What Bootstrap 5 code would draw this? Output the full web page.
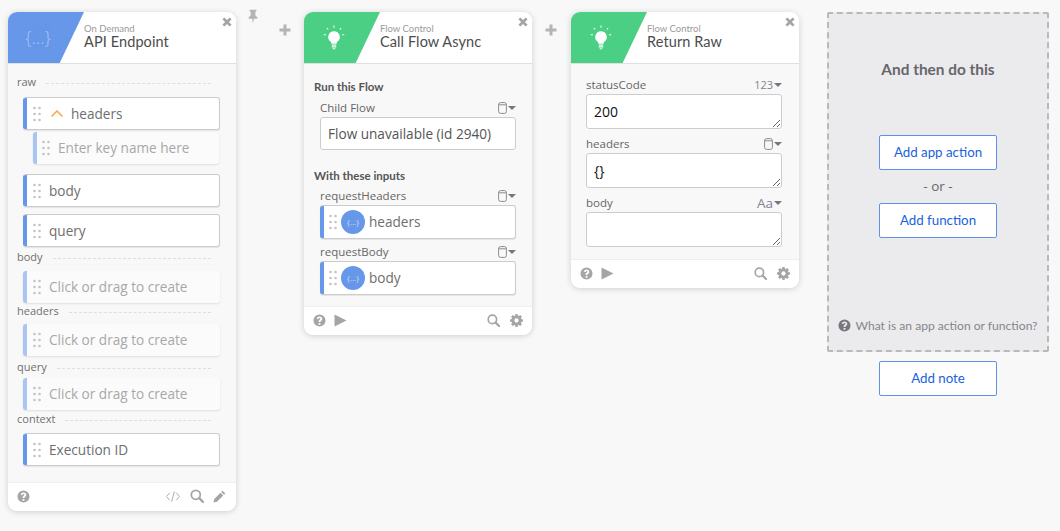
<!DOCTYPE html>
<html lang="en">
<head>
<meta charset="UTF-8">
<meta name="viewport" content="width=device-width, initial-scale=1.0">
<title>Flow Editor</title>
<link href="https://cdn.jsdelivr.net/npm/bootstrap@5.3.3/dist/css/bootstrap.min.css" rel="stylesheet">
<style>
body { background: #f8f8f8; font-family: "Open Sans", sans-serif; color: #666; height: 531px; overflow: hidden; }
.canvas { padding: 12px 10px 0 8px; }
.gutter { position: relative; }
.gutter-a { width: 68px; }
.gutter-b { width: 39px; }
.gutter-c { width: 28px; }
.pin-icon { position: absolute; left: 11px; top: -3px; width: 12px; height: 15px; fill: #b4b4b4; }
.plus-icon { position: absolute; top: 12px; width: 12px; height: 12px; fill: #b4b4b4; }
.gutter-a .plus-icon { left: 43px; }
.gutter-b .plus-icon { left: 13px; }
.step { width: 228px; border: 0; border-radius: 9px; background: #f8f8f8; box-shadow: 0 1px 6px rgba(0,0,0,.17); overflow: hidden; }
.step-head { height: 52px; background: #fff; border-bottom: 1px solid #e0e0e0; position: relative; }
.step-badge { width: 76px; height: 51px; clip-path: polygon(0 0, 100% 0, 68% 100%, 0 100%); flex: none; }
.badge-blue { background: #6797e8; }
.badge-green { background: #4bcf84; }
.brace-mark { color: #fff; opacity: .4; font-size: 18px; font-weight: 300; padding-right: 16px; }
.step-kicker { font-family: Lato, sans-serif; font-size: 9.5px; line-height: 11px; color: #9a9a9a; margin-top: 11px; }
.step-name { font-family: Lato, sans-serif; font-size: 14.5px; line-height: 18px; color: #4c4c4c; margin-top: -1px; letter-spacing: .1px; }
.close-icon { position: absolute; right: 4px; top: 5px; width: 10px; height: 10px; fill: #a5a5a5; }
.step-foot { height: 29px; background: #fff; border-top: 1px solid #eee; padding: 0 9px 2px 9px; }
.foot-api { padding-right: 10px; }
.foot-icon { fill: #a5a5a5; width: 13px; height: 13px; display: block; }
.foot-code { width: 16px; }
.foot-search { width: 14px; height: 14px; }
.foot-tools { gap: 10px; }
.foot-api .foot-tools { gap: 9px; }
.body-api { height: 418px; padding: 11px 16px 0 9px; }
.body-async { height: 242px; padding: 16px 16px 0 10px; }
.body-raw { height: 195px; padding: 13px 17px 0 15px; }
.sect-label { font-size: 11px; line-height: 14px; color: #707070; white-space: nowrap; }
.dots { flex: 1; align-self: center; height: 0; border-bottom: 1px dashed #dedede; margin: 3px 9px 0 10px; }
.api-rows { margin-left: 6px; }
.field-pill { height: 33px; background: #fff; border: 1px solid #ccc; border-left: 0; border-radius: 3px; box-shadow: 0 1px 1px rgba(0,0,0,.08); position: relative; padding-left: 10px; font-size: 13.6px; color: #6e6e6e; overflow: hidden; }
.field-pill::before { content: ""; position: absolute; left: 0; top: 0; bottom: 0; width: 4px; background: #6797e8; }
.pill-empty { height: 32px; background: #fbfbfb; border: 0; box-shadow: 0 1px 2px rgba(0,0,0,.1); color: #a8a8a8; }
.pill-empty::before { background: #a9c5f2; }
.pill-word { margin-top: 2px; }
.grip { width: 8px; height: 16px; fill: #c4c4c4; flex: none; margin-right: 8px; }
.chevron { width: 12px; height: 7px; fill: none; stroke: #f5a742; stroke-width: 1.5; margin: 0 8px 0 2px; flex: none; }
.gap-s { margin-top: 2px; }
.gap-m { margin-top: 8px; }
.gap-q { margin-top: 7px; }
.gap-l { margin-top: 10px; }
.label-row { margin-top: 3px; margin-bottom: 7px; }
.label-tight { margin-top: 1px; margin-bottom: 6px; }
.label-wide { margin-top: 4px; margin-bottom: 4px; }
.label-mid { margin-top: 2px; margin-bottom: 7px; }
.indent-one { margin-left: 10px; width: 186px; padding-left: 9px; }
.group-title { font-family: Lato, sans-serif; font-weight: 700; font-size: 11.5px; line-height: 14px; color: #555; }
.title-next { margin-top: 19px; }
.field-name { font-size: 11.5px; line-height: 16px; color: #666; }
.field-row { margin: 0 0 1px 0; height: 16px; }
.row-first { margin-top: 6px; }
.row-after { margin-top: 5px; }
.row-raw { margin-top: 7px; }
.inputs { padding-left: 6px; }
.flow-input { height: 33px; font-size: 13.6px; color: #555; padding: 0 7px; border-color: #ccc; border-radius: 3px; background: #fff; }
.type-pick { display: flex; align-items: center; gap: 1px; color: #7d8590; font-size: 11px; line-height: 12px; }
.type-text { font-size: 13.5px; }
.db-icon { width: 9px; height: 12px; fill: none; stroke: #8c8c8c; }
.caret { width: 0; height: 0; border-left: 4px solid transparent; border-right: 4px solid transparent; border-top: 4px solid #777; }
.ref-dot { width: 24px; height: 24px; border-radius: 50%; background: #6797e8; color: #cfdff8; font-size: 8px; margin-right: 4px; flex: none; }
.ref-pill { height: 34px; padding-left: 9px; }
.ref-pill .grip { margin-right: 4px; }
.raw-area { height: 35px; min-height: 35px; font-size: 14px; color: #111; padding: 7px 7px 3px; border-color: #ccc; border-radius: 3px; line-height: 20px; resize: vertical; }
.drop-col { width: 222px; }
.drop-zone { height: 340px; background: #ebebed; border: 2px dashed #b9b9b9; border-radius: 2px; padding-top: 45px; }
.drop-title { font-family: Lato, sans-serif; font-weight: 700; font-size: 15.4px; line-height: 20px; color: #66666c; }
.add-btn { width: 118px; height: 35px; background: #fff; border: 1px solid #5f92e6; border-radius: 2px; color: #1a62dc; font-family: Lato, sans-serif; font-size: 13.3px; padding: 0; }
.first-btn { margin-top: 56px; }
.or-text { font-size: 13.5px; line-height: 16px; color: #666; margin: 8px 0 9px; }
.drop-help { font-family: Lato, sans-serif; font-size: 12.1px; color: #85858b; margin-bottom: 15px; }
.drop-help svg { width: 13px; height: 13px; fill: #77777d; }
.note-wrap { margin-top: 9px; }
</style>
</head>
<body>
<svg width="0" height="0" class="d-block position-absolute">
  <defs>
    <symbol id="i-grip" viewBox="0 0 8 16"><circle cx="1.5" cy="2" r="1.3"/><circle cx="6.5" cy="2" r="1.3"/><circle cx="1.5" cy="8" r="1.3"/><circle cx="6.5" cy="8" r="1.3"/><circle cx="1.5" cy="14" r="1.3"/><circle cx="6.5" cy="14" r="1.3"/></symbol>
    <symbol id="i-close" viewBox="0 0 10 10"><path d="M2.3 .4 5 3.1 7.7 .4 9.6 2.3 6.9 5l2.7 2.7-1.9 1.9L5 6.9 2.3 9.6.4 7.7 3.1 5 .4 2.3z"/></symbol>
    <symbol id="i-help" viewBox="0 0 14 14"><path fill-rule="evenodd" d="M7 .5a6.5 6.5 0 1 1 0 13 6.5 6.5 0 0 1 0-13zM6 9.6v1.9h2V9.6zM7 2.6c-1.7 0-2.9 1-3 2.6l1.9.3c.1-.8.5-1.2 1.1-1.2.6 0 1 .3 1 .8 0 .4-.3.7-.9 1.1C6.300 6.700 6 7.200 6 8v.7h2V8.300c0-.4.2-.6.8-1C9.600 6.800 10 6.200 10 5.300c0-1.600-1.300-2.700-3-2.700z"/></symbol>
    <symbol id="i-search" viewBox="0 0 14 14"><circle cx="5.800" cy="5.800" r="4.500" fill="none" stroke="#a5a5a5" stroke-width="1.800"/><path d="M9.200 9.200 13 13" fill="none" stroke="#a5a5a5" stroke-width="2.400" stroke-linecap="round"/></symbol>
    <symbol id="i-gear" viewBox="0 0 14 14"><path fill-rule="evenodd" d="M5.800 0h2.400l.3 1.800 1 .4L11 1.200 12.800 3l-1 1.500.4 1L14 5.800v2.400l-1.800.3-.4 1 1 1.500L11 12.800l-1.500-1-1 .4L8.200 14H5.800l-.3-1.800-1-.4-1.500 1L1.200 11l1-1.500-.4-1L0 8.200V5.800l1.800-.3.4-1-1-1.500L3 1.200l1.500 1 1-.4zM7 4.700a2.300 2.300 0 1 0 0 4.600 2.300 2.300 0 0 0 0-4.600z"/></symbol>
    <symbol id="i-pencil" viewBox="0 0 14 14"><path d="M10.300.7 13.300 3.700 11.800 5.200 8.800 2.200zM8 3 11 6 4.400 12.600.5 13.500 1.400 9.600z"/></symbol>
    <symbol id="i-code" viewBox="0 0 16 14"><path d="M4.500 3 1 7l3.500 4M11.500 3 15 7l-3.500 4M9.500 1.500 6.500 12.500" fill="none" stroke="#a5a5a5" stroke-width="1"/></symbol>
    <symbol id="i-play" viewBox="0 0 13 13"><path d="M.5 .5 12.500 6.500.5 12.500z"/></symbol>
    <symbol id="i-bulb" viewBox="0 0 26 28"><path d="M13 7a6.500 6.500 0 0 1 4 11.600c-.8.700-1 1.400-1 2.400h-6c0-1-.2-1.700-1-2.400A6.500 6.500 0 0 1 13 7z" fill="#fff"/><path d="M10.500 22.500h5M10.500 24.500h5M11.500 26.500h3M13 .5v2.500M5 3.500 6.500 5M21 3.500 19.500 5M1.500 11h2.500M22 11h2.500" stroke="#fff" stroke-width="1.200" fill="none" opacity=".95"/></symbol>
    <symbol id="i-db" viewBox="0 0 9 12"><rect x=".6" y=".6" width="7.800" height="10.800" rx="2"/><path d="M.6 2.800h7.800"/></symbol>
  </defs>
</svg>

<div class="canvas d-flex align-items-start">
  <!-- trigger step -->
  <div class="card step flex-none">
    <div class="step-head d-flex">
      <div class="step-badge badge-blue d-flex align-items-center justify-content-center"><span class="brace-mark">{...}</span></div>
      <div>
        <div class="step-kicker">On Demand</div>
        <div class="step-name">API Endpoint</div>
      </div>
      <svg class="close-icon"><use href="#i-close"/></svg>
    </div>
    <div class="body-api">
      <div class="d-flex"><span class="sect-label">raw</span><span class="dots"></span></div>
      <div class="api-rows">
        <div class="field-pill d-flex align-items-center gap-m"><svg class="grip"><use href="#i-grip"/></svg><svg class="chevron" viewBox="0 0 12 7"><path d="M.5 6.500 6 1l5.500 5.500"/></svg><span class="pill-word">headers</span></div>
        <div class="field-pill pill-empty indent-one d-flex align-items-center gap-s"><svg class="grip"><use href="#i-grip"/></svg>Enter key name here</div>
        <div class="field-pill d-flex align-items-center gap-l"><svg class="grip"><use href="#i-grip"/></svg><span class="pill-word">body</span></div>
        <div class="field-pill d-flex align-items-center gap-q"><svg class="grip"><use href="#i-grip"/></svg><span class="pill-word">query</span></div>
      </div>
      <div class="d-flex label-row"><span class="sect-label">body</span><span class="dots"></span></div>
      <div class="api-rows"><div class="field-pill pill-empty d-flex align-items-center"><svg class="grip"><use href="#i-grip"/></svg>Click or drag to create</div></div>
      <div class="d-flex label-tight"><span class="sect-label">headers</span><span class="dots"></span></div>
      <div class="api-rows"><div class="field-pill pill-empty d-flex align-items-center"><svg class="grip"><use href="#i-grip"/></svg>Click or drag to create</div></div>
      <div class="d-flex label-wide"><span class="sect-label">query</span><span class="dots"></span></div>
      <div class="api-rows"><div class="field-pill pill-empty d-flex align-items-center"><svg class="grip"><use href="#i-grip"/></svg>Click or drag to create</div></div>
      <div class="d-flex label-mid"><span class="sect-label">context</span><span class="dots"></span></div>
      <div class="api-rows"><div class="field-pill d-flex align-items-center"><svg class="grip"><use href="#i-grip"/></svg><span class="pill-word">Execution ID</span></div></div>
    </div>
    <div class="step-foot foot-api d-flex align-items-center">
      <svg class="foot-icon"><use href="#i-help"/></svg>
      <div class="ms-auto d-flex align-items-center foot-tools">
        <svg class="foot-icon foot-code"><use href="#i-code"/></svg>
        <svg class="foot-icon foot-search"><use href="#i-search"/></svg>
        <svg class="foot-icon"><use href="#i-pencil"/></svg>
      </div>
    </div>
  </div>

  <div class="gutter gutter-a">
    <svg class="pin-icon" viewBox="0 0 14 16"><path d="M3 0h8v1.500L9.800 2.500v4.300L12 9v1.500H8L7 16l-1-5.500H2V9l2.200-2.200V2.500L3 1.500z"/></svg>
    <svg class="plus-icon" viewBox="0 0 12 12"><path d="M4.500 .5h3v4h4v3h-4v4h-3v-4h-4v-3h4z"/></svg>
  </div>

  <!-- call flow step -->
  <div class="card step">
    <div class="step-head d-flex">
      <div class="step-badge badge-green d-flex align-items-center justify-content-center"><svg class="me-3" width="24" height="25"><use href="#i-bulb"/></svg></div>
      <div>
        <div class="step-kicker">Flow Control</div>
        <div class="step-name">Call Flow Async</div>
      </div>
      <svg class="close-icon"><use href="#i-close"/></svg>
    </div>
    <div class="body-async">
      <div class="group-title">Run this Flow</div>
      <div class="inputs">
        <div class="d-flex justify-content-between align-items-center field-row row-first">
          <span class="field-name">Child Flow</span>
          <span class="type-pick"><svg class="db-icon"><use href="#i-db"/></svg><span class="caret"></span></span>
        </div>
        <input class="form-control flow-input" type="text" value="Flow unavailable (id 2940)">
      </div>
      <div class="group-title title-next">With these inputs</div>
      <div class="inputs">
        <div class="d-flex justify-content-between align-items-center field-row row-after">
          <span class="field-name">requestHeaders</span>
          <span class="type-pick"><svg class="db-icon"><use href="#i-db"/></svg><span class="caret"></span></span>
        </div>
        <div class="field-pill ref-pill d-flex align-items-center"><svg class="grip"><use href="#i-grip"/></svg><span class="ref-dot d-flex align-items-center justify-content-center">{...}</span>headers</div>
        <div class="d-flex justify-content-between align-items-center field-row row-after">
          <span class="field-name">requestBody</span>
          <span class="type-pick"><svg class="db-icon"><use href="#i-db"/></svg><span class="caret"></span></span>
        </div>
        <div class="field-pill ref-pill d-flex align-items-center"><svg class="grip"><use href="#i-grip"/></svg><span class="ref-dot d-flex align-items-center justify-content-center">{...}</span>body</div>
      </div>
    </div>
    <div class="step-foot d-flex align-items-center">
      <svg class="foot-icon"><use href="#i-help"/></svg>
      <svg class="foot-icon ms-2"><use href="#i-play"/></svg>
      <div class="ms-auto d-flex align-items-center foot-tools">
        <svg class="foot-icon"><use href="#i-search"/></svg>
        <svg class="foot-icon"><use href="#i-gear"/></svg>
      </div>
    </div>
  </div>

  <div class="gutter gutter-b">
    <svg class="plus-icon" viewBox="0 0 12 12"><path d="M4.500 .5h3v4h4v3h-4v4h-3v-4h-4v-3h4z"/></svg>
  </div>

  <!-- return step -->
  <div class="card step">
    <div class="step-head d-flex">
      <div class="step-badge badge-green d-flex align-items-center justify-content-center"><svg class="me-3" width="24" height="25"><use href="#i-bulb"/></svg></div>
      <div>
        <div class="step-kicker">Flow Control</div>
        <div class="step-name">Return Raw</div>
      </div>
      <svg class="close-icon"><use href="#i-close"/></svg>
    </div>
    <div class="body-raw">
      <div class="d-flex justify-content-between align-items-center field-row">
        <span class="field-name">statusCode</span>
        <span class="type-pick">123<span class="caret"></span></span>
      </div>
      <textarea class="form-control raw-area">200</textarea>
      <div class="d-flex justify-content-between align-items-center field-row row-raw">
        <span class="field-name">headers</span>
        <span class="type-pick"><svg class="db-icon"><use href="#i-db"/></svg><span class="caret"></span></span>
      </div>
      <textarea class="form-control raw-area">{}</textarea>
      <div class="d-flex justify-content-between align-items-center field-row row-raw">
        <span class="field-name">body</span>
        <span class="type-pick"><span class="type-text">Aa</span><span class="caret"></span></span>
      </div>
      <textarea class="form-control raw-area"></textarea>
    </div>
    <div class="step-foot d-flex align-items-center">
      <svg class="foot-icon"><use href="#i-help"/></svg>
      <svg class="foot-icon ms-2"><use href="#i-play"/></svg>
      <div class="ms-auto d-flex align-items-center foot-tools">
        <svg class="foot-icon"><use href="#i-search"/></svg>
        <svg class="foot-icon"><use href="#i-gear"/></svg>
      </div>
    </div>
  </div>

  <div class="gutter gutter-c"></div>

  <!-- next step placeholder -->
  <div class="drop-col d-flex flex-column align-items-center">
    <div class="drop-zone w-100 d-flex flex-column align-items-center">
      <div class="drop-title">And then do this</div>
      <button class="btn add-btn first-btn">Add app action</button>
      <div class="or-text">- or -</div>
      <button class="btn add-btn">Add function</button>
      <div class="drop-help mt-auto d-flex align-items-center gap-1"><svg><use href="#i-help"/></svg>What is an app action or function?</div>
    </div>
    <div class="note-wrap"><button class="btn add-btn">Add note</button></div>
  </div>
</div>

<script src="https://cdn.jsdelivr.net/npm/bootstrap@5.3.3/dist/js/bootstrap.bundle.min.js"></script>
</body>
</html>
